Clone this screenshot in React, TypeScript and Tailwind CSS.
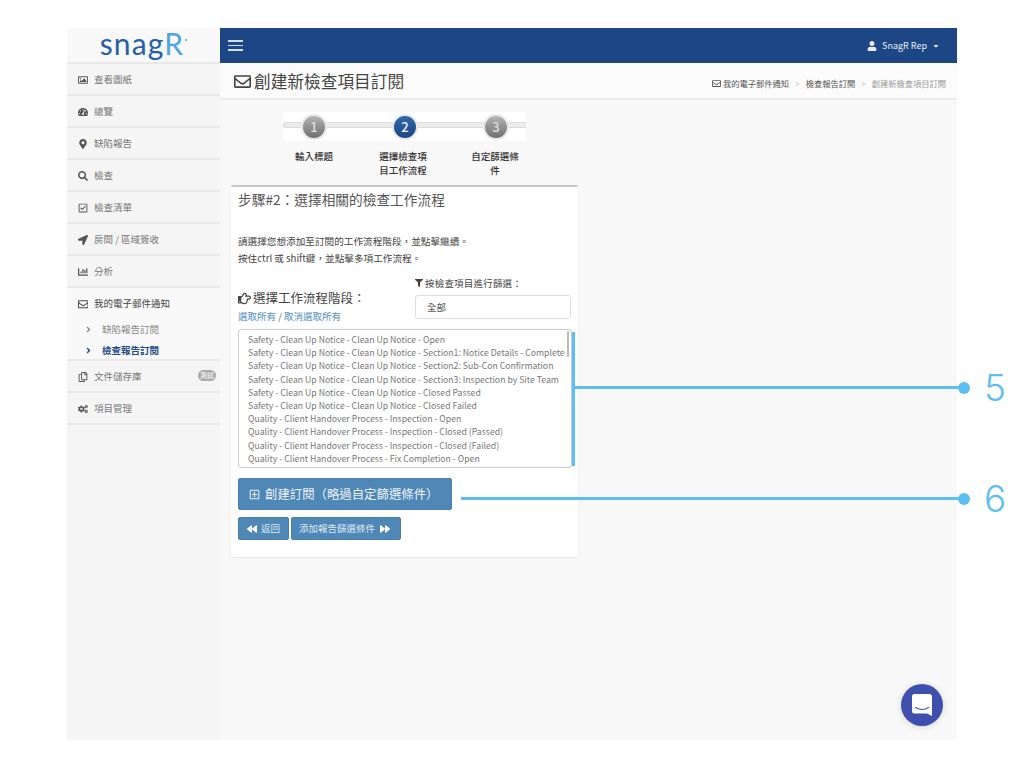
import React from 'react';
import {
  FaRegImage, FaTachometerAlt, FaMapMarkerAlt, FaSearch, FaRegCheckSquare, FaLocationArrow,
  FaChartBar, FaRegEnvelope, FaAngleRight, FaRegCopy, FaCogs, FaUser, FaCaretDown,
  FaRegHandPointRight, FaFilter, FaRegPlusSquare, FaBackward, FaForward,
} from 'react-icons/fa';

const font = { fontFamily: '"Noto Sans CJK TC", "Noto Sans", sans-serif' };

const navTop = [
  { icon: FaRegImage, label: '查看圖紙' },
  { icon: FaTachometerAlt, label: '總覽' },
  { icon: FaMapMarkerAlt, label: '缺陷報告' },
  { icon: FaSearch, label: '檢查' },
  { icon: FaRegCheckSquare, label: '檢查清單' },
  { icon: FaLocationArrow, label: '房間 / 區域簽收' },
  { icon: FaChartBar, label: '分析' },
];

const stages = [
  'Safety - Clean Up Notice - Clean Up Notice - Open',
  'Safety - Clean Up Notice - Clean Up Notice - Section1: Notice Details - Complete',
  'Safety - Clean Up Notice - Clean Up Notice - Section2: Sub-Con Confirmation',
  'Safety - Clean Up Notice - Clean Up Notice - Section3: Inspection by Site Team',
  'Safety - Clean Up Notice - Clean Up Notice - Closed Passed',
  'Safety - Clean Up Notice - Clean Up Notice - Closed Failed',
  'Quality - Client Handover Process - Inspection - Open',
  'Quality - Client Handover Process - Inspection - Closed (Passed)',
  'Quality - Client Handover Process - Inspection - Closed (Failed)',
  'Quality - Client Handover Process - Fix Completion - Open',
];

function NavRow({ icon: Icon, label, badge }: { icon: React.ComponentType<{ className?: string }>; label: string; badge?: string }) {
  return (
    <div className="relative flex h-[32px] items-center border-b-2 border-[#e9e9e9] pl-[8px] pt-[2px] text-[#777]">
      <span className="flex w-[19px] justify-center pr-[3px]">
        <Icon className="text-[10px] text-[#555]" />
      </span>
      <span className="text-[9.5px] leading-none">{label}</span>
      {badge && (
        <span className="absolute right-[4px] top-[9px] h-[11px] rounded-full bg-[#aaa] px-[2px] text-[7px] leading-[11px] text-white">
          {badge}
        </span>
      )}
    </div>
  );
}

function Step({ n, active }: { n: number; active?: boolean }) {
  return (
    <div
      className={
        'z-10 flex h-[26px] w-[26px] items-center justify-center rounded-full border-2 border-[#e8e8e8] text-[13px] font-medium text-[#ddd] ' +
        (active ? 'bg-gradient-to-b from-[#2f6aa8] to-[#1c4584] text-[#f2f2f2]' : 'bg-gradient-to-b from-[#b5b5b5] to-[#707070]')
      }
    >
      {n}
    </div>
  );
}

function Callout({ top, left, width, n }: { top: number; left: number; width: number; n: string }) {
  return (
    <>
      <div className="absolute h-[3px] bg-[#5cbef5]" style={{ top: top - 1, left, width }} />
      <div className="absolute h-[12px] w-[12px] rounded-full bg-[#5cbef5]" style={{ top: top - 5, left: left + width - 2 }} />
      <div
        className="absolute text-[37px] font-light leading-none text-[#5cbef5]"
        style={{ top: top - 18, left: 984, fontFamily: 'Inter, "Liberation Sans", sans-serif' }}
      >
        {n}
      </div>
    </>
  );
}

export default function App() {
  return (
    <div className="relative h-[768px] w-[1024px] overflow-hidden bg-white pl-[67px] pt-[28px]" style={font}>
      <div className="flex h-[712px] w-[890px]">
        {/* sidebar */}
        <aside className="w-[153px] shrink-0 bg-[#f5f5f5]">
          <div className="flex h-[36px] items-center justify-center border-b-2 border-[#e9e9e9] bg-[#f8f8f8] pb-[4px] pr-[3px]">
            <span className="relative text-[30px] leading-none tracking-[1.2px] text-[#2560a8]" style={{ fontFamily: 'Lato, sans-serif' }}>
              snag<span className="text-[#4da6dc]">R</span>
              <span className="absolute -right-[3px] top-[11px] h-[2px] w-[2px] rounded-full bg-[#4da6dc]" />
            </span>
          </div>
          {navTop.map((item) => (
            <NavRow key={item.label} icon={item.icon} label={item.label} />
          ))}
          <div className="h-[73px] border-b-2 border-[#e9e9e9] bg-[#f9f9f9]">
            <div className="flex h-[32px] items-center pl-[8px] text-[#444]">
              <span className="flex w-[19px] justify-center pr-[3px]">
                <FaRegEnvelope className="text-[10.5px]" />
              </span>
              <span className="text-[9.5px] leading-none">我的電子郵件通知</span>
            </div>
            <div className="-mt-[1px] flex h-[21px] items-center pl-[17px] text-[#888]">
              <FaAngleRight className="text-[9px]" />
              <span className="ml-[9px] text-[9.5px] leading-none">缺陷報告訂閱</span>
            </div>
            <div className="flex h-[21px] items-center pl-[17px] font-bold text-[#1d4a87]">
              <FaAngleRight className="text-[9px]" />
              <span className="ml-[9px] text-[9.5px] leading-none">檢查報告訂閱</span>
            </div>
          </div>
          <NavRow icon={FaRegCopy} label="文件儲存庫" badge="測試" />
          <NavRow icon={FaCogs} label="項目管理" />
        </aside>

        {/* main */}
        <main className="flex min-w-0 flex-1 flex-col bg-[#f8f8f8]">
          <header className="flex h-[35px] shrink-0 items-center justify-between bg-[#1d4685] pl-[8px] pr-[17px] text-white">
            <div className="flex w-[15px] flex-col gap-[3px]">
              <span className="h-[1.5px] bg-[#d5deea]" />
              <span className="h-[1.5px] bg-[#d5deea]" />
              <span className="h-[1.5px] bg-[#d5deea]" />
            </div>
            <div className="flex items-center text-[9px] text-[#e8edf4]">
              <FaUser className="mr-[5px] text-[10px]" />
              SnagR Rep
              <FaCaretDown className="ml-[5px] text-[8px]" />
            </div>
          </header>
          <div className="flex h-[37px] shrink-0 items-center justify-between border-b-2 border-[#ececec] bg-[#fbfbfb] pl-[14px] pr-[11px] pt-[2px]">
            <div className="flex items-center text-[16.7px] leading-none text-[#444]">
              <FaRegEnvelope className="mr-[3px] text-[17px]" />
              創建新檢查項目訂閱
            </div>
            <div className="mt-[3px] flex items-center text-[8.25px] text-[#555]">
              <FaRegEnvelope className="mr-[2px] text-[9px]" />
              我的電子郵件通知
              <span className="mx-[6px] text-[#ccc]">&gt;</span>
              檢查報告訂閱
              <span className="mx-[6px] text-[#ccc]">&gt;</span>
              <span className="text-[#999]">創建新檢查項目訂閱</span>
            </div>
          </div>

          <div className="pl-[11px] pt-[12px]">
            {/* steps */}
            <div className="ml-[52px] w-[243px]">
              <div className="relative flex h-[29px] items-center bg-white pl-[18px] pt-[1px]">
                <div className="absolute left-0 right-0 top-[10px] h-[6px] rounded-l-full border border-r-0 border-[#dcdcdc] bg-[#ececec]" />
                <div className="flex gap-[65px]">
                  <Step n={1} />
                  <Step n={2} active />
                  <Step n={3} />
                </div>
              </div>
            </div>
            <div className="ml-[52px] mt-[8px] flex h-[28px] w-[248px] text-[9.5px] font-medium leading-[14px] text-[#333]">
              <div className="ml-[-1px] w-[64px] text-center">輸入標題</div>
              <div className="ml-[31px] w-[52px] text-center">選擇檢查項目工作流程</div>
              <div className="ml-[40px] w-[52px] text-center">自定篩選條件</div>
            </div>

            {/* card */}
            <section className="mt-[8px] h-[372px] w-[347px] rounded-[2px] border-t-2 border-[#c8c8c8] bg-white px-[7px] pt-[3px] shadow-[0_1px_2px_rgba(0,0,0,0.08)]">
              <h2 className="text-[13.7px] font-normal leading-[18px] text-[#555]">步驟#2：選擇相關的檢查工作流程</h2>
              <p className="mt-[25px] text-[9.65px] leading-[17px] text-[#444]">
                請選擇您想添加至訂閱的工作流程階段，並點擊繼續。
                <br />
                按住ctrl 或 shift鍵，並點擊多項工作流程。
              </p>
              <div className="mt-[9px] flex justify-between">
                <div className="pt-[14px]">
                  <div className="flex items-center text-[12.5px] leading-[16px] text-[#444]">
                    <FaRegHandPointRight className="mr-[2px] text-[13px]" />
                    選擇工作流程階段：
                  </div>
                  <div className="mt-[4px] text-[9.5px] leading-[12px] text-[#4f8fbd]">
                    選取所有 <span className="text-[#666]">/</span> 取消選取所有
                  </div>
                </div>
                <div className="w-[156px]">
                  <div className="flex h-[14px] items-center text-[9.5px] tracking-[0.2px] text-[#444]">
                    <FaFilter className="mr-[2px] text-[8px]" />
                    按檢查項目進行篩選：
                  </div>
                  <div className="mt-[5px] flex h-[24px] items-center rounded-[3px] border border-[#ddd] pl-[11px] text-[9.5px] text-[#555]">
                    全部
                  </div>
                </div>
              </div>
              <div className="relative mt-[7px] h-[139px] w-[334px] rounded-[3px] border border-[#ccc] pl-[9px] pt-[3px] text-[8.7px] leading-[13.2px] text-[#777]">
                {stages.map((s) => (
                  <div key={s} className="whitespace-nowrap">{s}</div>
                ))}
                <div className="absolute right-[2px] top-[1px] h-[26px] w-[2px] rounded bg-[#bbb]" />
              </div>
              <button className="mt-[10px] flex h-[32px] w-[214px] items-center rounded-[2px] border border-[#4a7fae] bg-[#4f87b6] pl-[10px] text-[12.4px] text-[#eef3f8]">
                <FaRegPlusSquare className="mr-[5px] text-[11px]" />
                創建訂閱（略過自定篩選條件）
              </button>
              <div className="mt-[7px] flex gap-[2px]">
                <button className="flex h-[23px] w-[51px] items-center justify-center rounded-[2px] border border-[#4a7fae] bg-[#4f87b6] text-[9.5px] text-[#dfe9f2]">
                  <FaBackward className="mr-[4px] text-[10px] text-white" />
                  返回
                </button>
                <button className="flex h-[23px] w-[110px] items-center justify-center rounded-[2px] border border-[#4a7fae] bg-[#4f87b6] pr-[3px] text-[9.5px] text-[#dfe9f2]">
                  添加報告篩選條件
                  <FaForward className="ml-[5px] text-[10px] text-white" />
                </button>
              </div>
            </section>
          </div>
        </main>
      </div>

      {/* annotations over the screenshot */}
      <div className="absolute left-[572px] top-[332px] h-[134px] w-[3px] bg-[#5cbef5]" />
      <Callout top={387} left={573} width={387} n="5" />
      <Callout top={498} left={461} width={499} n="6" />

      {/* chat launcher */}
      <div className="absolute left-[901px] top-[684px] flex h-[42px] w-[42px] items-center justify-center rounded-full bg-[#3f4fae] shadow-[0_1px_6px_rgba(0,0,0,0.15)]">
        <svg width="20" height="22" viewBox="0 0 20 22">
          <path d="M2.5 0h15A2.5 2.5 0 0 1 20 2.5V22l-5-2.5H2.5A2.5 2.5 0 0 1 0 17V2.5A2.5 2.5 0 0 1 2.5 0z" fill="#fff" />
          <path d="M3.5 13.5c4 2.4 9 2.4 13 0" fill="none" stroke="#3f4fae" strokeWidth="1.1" strokeLinecap="round" />
        </svg>
      </div>
    </div>
  );
}
